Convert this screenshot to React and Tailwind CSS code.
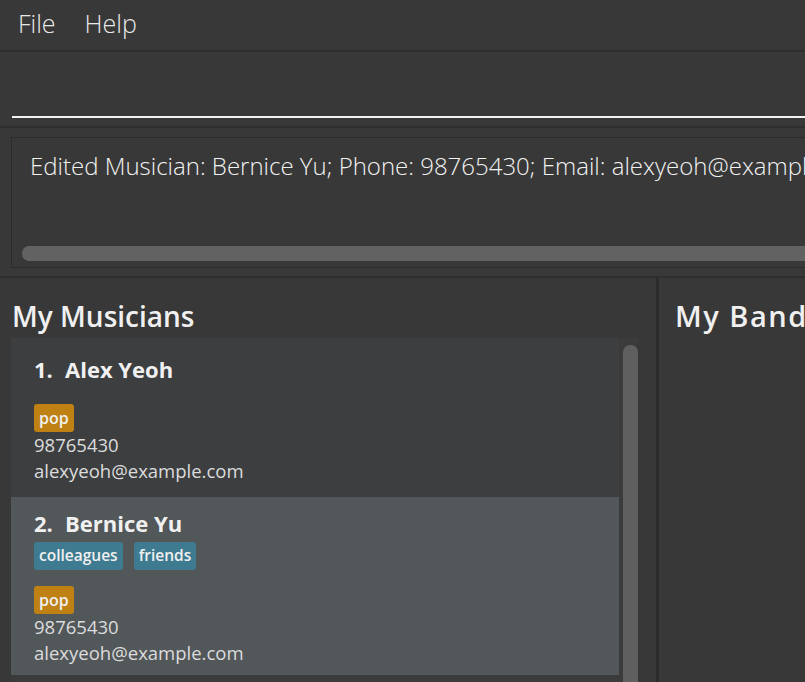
import React from "react";

const musicians = [
  {
    name: "Alex Yeoh",
    tags: [],
    genres: ["pop"],
    phone: "98765430",
    email: "alexyeoh@example.com",
    selected: false,
  },
  {
    name: "Bernice Yu",
    tags: ["colleagues", "friends"],
    genres: ["pop"],
    phone: "98765430",
    email: "alexyeoh@example.com",
    selected: true,
  },
];

const MusicianCard = ({ index, musician }) => {
  return (
    <div
      className={`flex flex-col justify-center pl-[23px] pt-[11px] pb-[9px] ${
        musician.selected ? "bg-[#52575a]" : "bg-[#3c3e40] min-h-[159px]"
      }`}
    >
      <div className="flex text-[22px] leading-[30px] font-bold text-[#f0f0f0]">
        <span className="w-[31px]">{index}.</span>
        <span>{musician.name}</span>
      </div>
      <div className="flex gap-[11px] mt-[4px]">
        {musician.tags.map((tag) => (
          <span
            key={tag}
            className="h-[28px] px-[5px] flex items-center rounded-[3px] bg-[#3e7b91] text-[15.5px] font-semibold text-[#f0f0f0]"
          >
            {tag}
          </span>
        ))}
      </div>
      <div className="flex mt-[16px]">
        {musician.genres.map((genre) => (
          <span
            key={genre}
            className="h-[28px] px-[5px] flex items-center rounded-[3px] bg-[#bf8113] text-[16px] font-semibold text-[#f0f0f0]"
          >
            {genre}
          </span>
        ))}
      </div>
      <div className="text-[18.5px] leading-[26px] text-[#dcdcdc]">
        {musician.phone}
      </div>
      <div className="text-[18.5px] leading-[26px] text-[#dcdcdc]">
        {musician.email}
      </div>
    </div>
  );
};

const App = () => {
  return (
    <div
      className="w-full h-[682px] overflow-hidden bg-[#383838] flex flex-col"
      style={{ fontFamily: '"Open Sans", "Noto Sans", sans-serif' }}
    >
      {/* menu bar */}
      <div className="h-[52px] shrink-0 flex items-center gap-[29px] pl-[18px] pb-[2px] border-b-2 border-[#2e2e2e] text-[25px] font-light text-[#e8e8e8]">
        <span>File</span>
        <span>Help</span>
      </div>

      {/* command box */}
      <div className="h-[76px] shrink-0 pl-[12px] pt-[64px] border-b-2 border-[#2e2e2e]">
        <div className="h-[2px] bg-[#f2f2f2]" />
      </div>

      {/* result display */}
      <div className="h-[150px] shrink-0 pl-[11px] pt-[9px] pb-[8px] border-b-2 border-[#2e2e2e]">
        <div className="h-full border border-[#2b2b2b] border-r-0 flex flex-col pl-[10px]">
          <div className="pt-[10px] pl-[8px] text-[24px] font-light text-[#f2f2f2] whitespace-nowrap overflow-hidden">
            Edited Musician: Bernice Yu; Phone: 98765430; Email: alexyeoh@example.com
          </div>
          <div className="mt-auto mb-[6px] h-[15px] rounded-l-[7px] bg-[#626262]" />
        </div>
      </div>

      {/* lists */}
      <div className="flex-1 flex min-h-0">
        <div className="w-[656px] shrink-0 flex flex-col pl-[11px] pr-[18px]">
          <div className="h-[60px] shrink-0 flex items-center pl-[1px] pt-[16px] text-[28px] font-semibold text-[#f0f0f0]">
            My Musicians
          </div>
          <div className="flex-1 flex min-h-0 bg-[#3b3b3c]">
            <div className="w-[608px] flex flex-col">
              {musicians.map((m, i) => (
                <MusicianCard key={m.name} index={i + 1} musician={m} />
              ))}
            </div>
            <div className="ml-[4px] mt-[7px] w-[15px] rounded-t-[7px] bg-[#5f5f5f]" />
          </div>
        </div>
        <div className="w-[3px] shrink-0 bg-[#2b2b2b]" />
        <div className="flex-1 flex flex-col pl-[16px] overflow-hidden">
          <div className="h-[60px] shrink-0 flex items-center pt-[16px] text-[29px] tracking-[1.5px] font-semibold text-[#f0f0f0] whitespace-nowrap">
            My Bands
          </div>
        </div>
      </div>
    </div>
  );
};

export default App;
